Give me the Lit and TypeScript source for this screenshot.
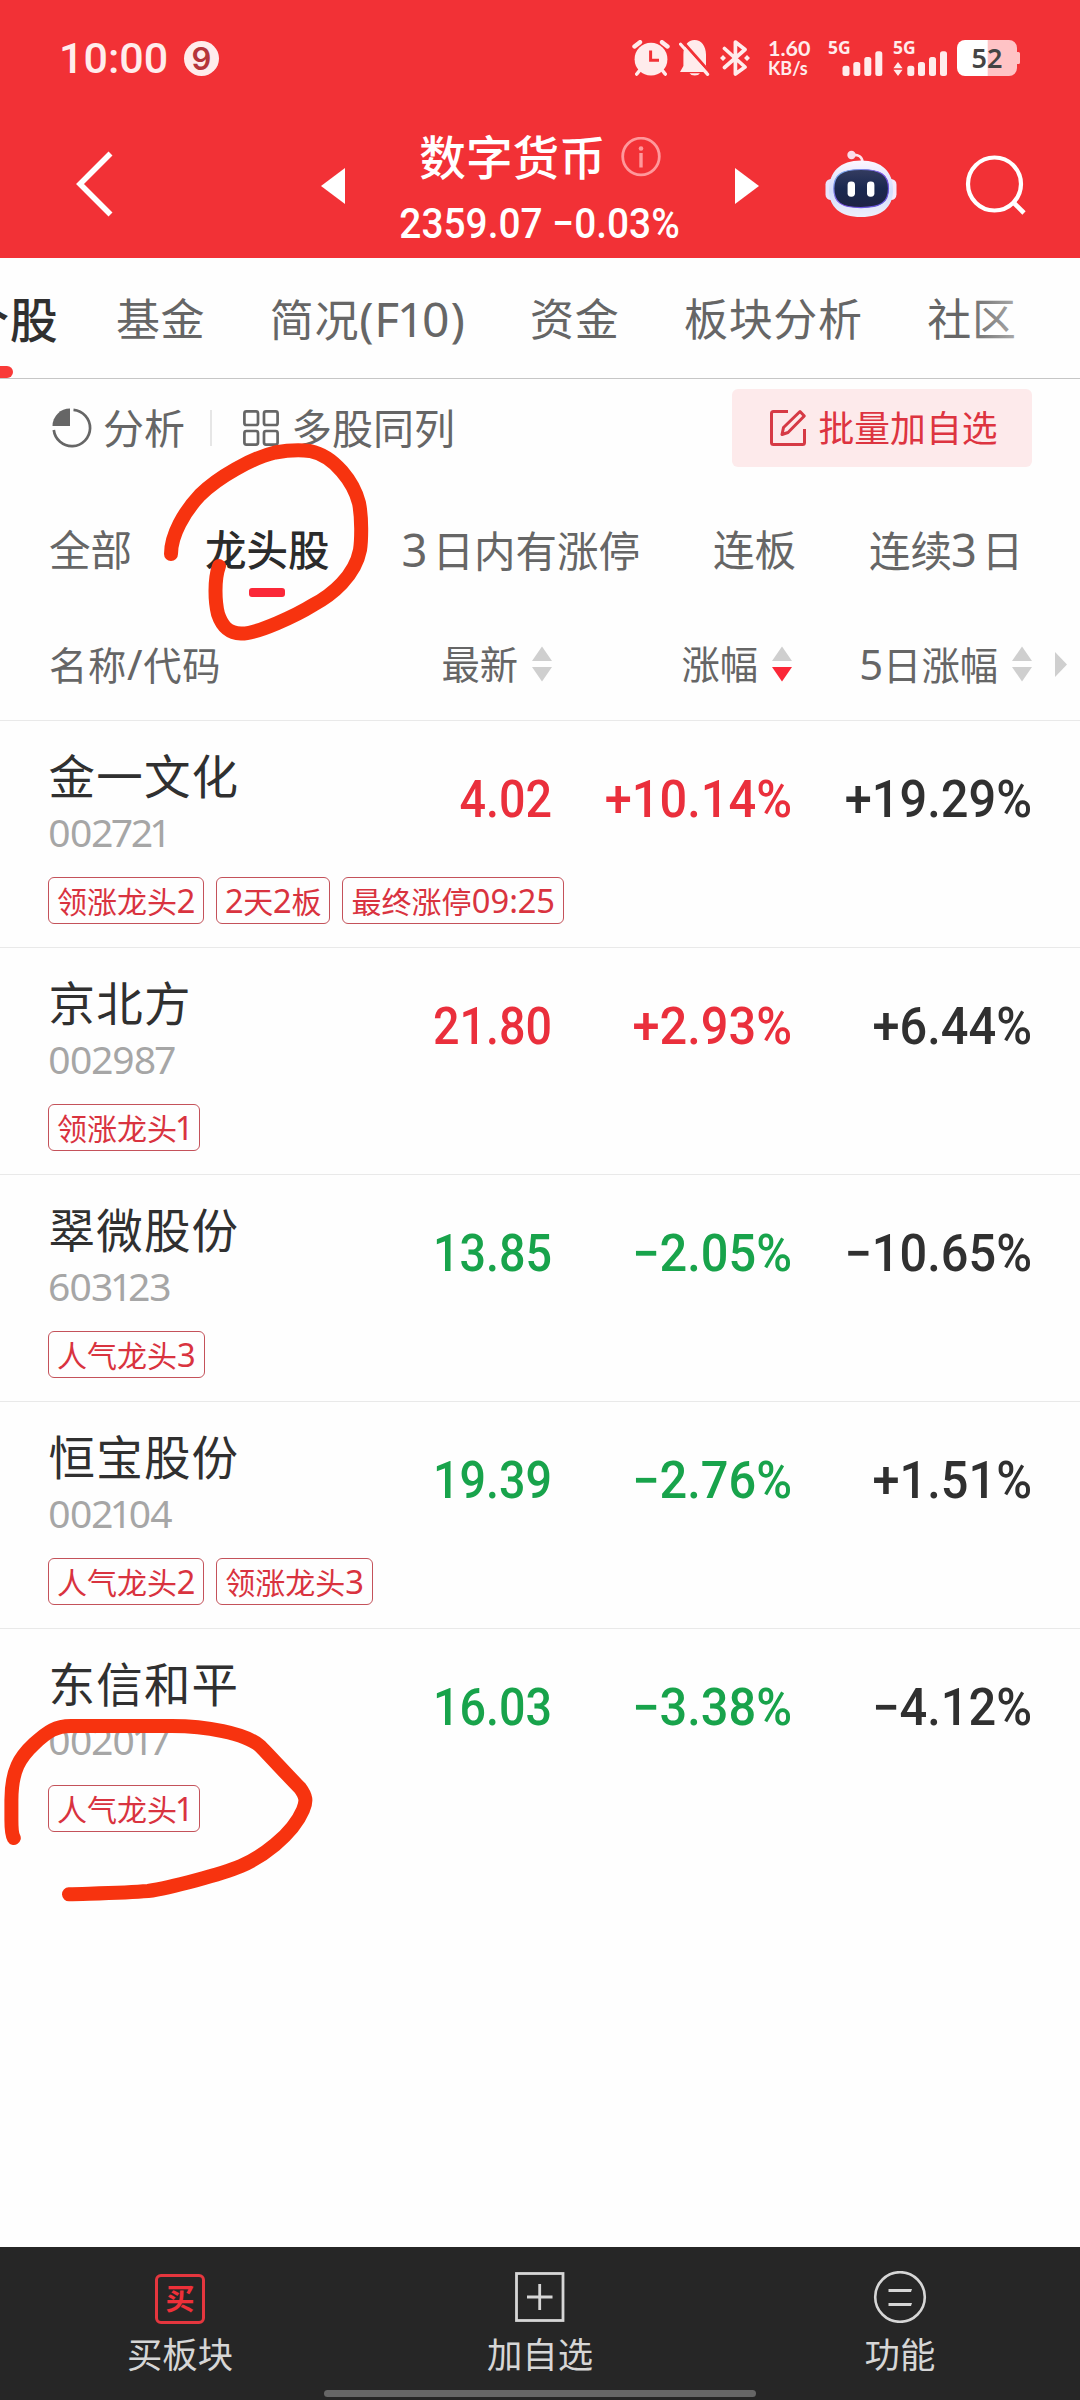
import { LitElement, html, css, svg } from "lit";
import { customElement, property } from "lit/decorators.js";

interface Stock {
  name: string;
  code: string;
  price: string;
  change: string;
  five: string;
  trend: "up" | "down";
  tags: string[];
}

const STOCKS: Stock[] = [
  { name: "金一文化", code: "002721", price: "4.02", change: "+10.14%", five: "+19.29%", trend: "up", tags: ["领涨龙头2", "2天2板", "最终涨停09:25"] },
  { name: "京北方", code: "002987", price: "21.80", change: "+2.93%", five: "+6.44%", trend: "up", tags: ["领涨龙头1"] },
  { name: "翠微股份", code: "603123", price: "13.85", change: "−2.05%", five: "−10.65%", trend: "down", tags: ["人气龙头3"] },
  { name: "恒宝股份", code: "002104", price: "19.39", change: "−2.76%", five: "+1.51%", trend: "down", tags: ["人气龙头2", "领涨龙头3"] },
  { name: "东信和平", code: "002017", price: "16.03", change: "−3.38%", five: "−4.12%", trend: "down", tags: ["人气龙头1"] },
];

const TABS = ["个股", "基金", "简况(F10)", "资金", "板块分析", "社区"];
const FILTERS = ["全部", "龙头股", "3日内有涨停", "连板", "连续3日"];

// Latin runs are set slightly larger than the Chinese text around them.
const mixed = (text: string) =>
  text
    .split(/([\x21-\x7e]+)/)
    .filter((part) => part)
    .map((part) => (/^[\x21-\x7e]/.test(part) ? html`<span class="latin">${part}</span>` : part));

const base = css`
  * { box-sizing: border-box; }
  svg { display: block; flex: none; }
  .latin { font-size: 1.09em; font-variant-numeric: proportional-nums; }
`;

const bars = (xs: number[]) => {
  const tops = [25.7, 22, 17, 11.3];
  return xs.map((x, i) => svg`<rect x=${x} y=${tops[i]} width="7" height=${36 - tops[i]} rx="2.5"/>`);
};

@customElement("status-bar")
class StatusBar extends LitElement {
  static styles = [base, css`
    :host { display: flex; align-items: center; height: 110px; padding: 6px 60px 0 59px; color: #ffecec; font-family: "Roboto", sans-serif; }
    .time { font-size: 43px; line-height: 50px; font-weight: 500; width: 125px; white-space: nowrap; }
    .badge { width: 35px; height: 35px; border-radius: 50%; background: #ffecec; color: #b5343a; font: 600 31px/35px "Inter", sans-serif; text-align: center; }
    .right { margin-left: auto; display: flex; align-items: center; }
    .bell { margin-left: 9px; }
    .bt { margin-left: 10px; }
    .speed { margin-left: 17px; width: 46px; height: 36px; font: 700 18px/17px "Lato", sans-serif; }
    .rate { font-size: 21.5px; line-height: 17px; white-space: nowrap; }
    .unit { font-size: 18px; line-height: 23px; white-space: nowrap; }
    .signal { position: relative; height: 36px; font: 700 17.5px/15px "Noto Sans", sans-serif; fill: currentColor; }
    .first { width: 55px; margin-left: 14px; }
    .second { width: 55px; margin-left: 10px; }
    .signal svg { position: absolute; left: 0; top: 0; }
    .battery { position: relative; margin-left: 9px; width: 63px; height: 36px; }
    .level { position: absolute; left: 0; top: 0; width: 60px; text-align: center; font: 600 27px/36px "Noto Sans", sans-serif; color: #444; }
  `];

  render() {
    return html`
      <div class="time">10:00</div>
      <div class="badge">9</div>
      <div class="right">
        <svg width="38" height="36" viewBox="0 0 38 36">
          <g stroke="#ffecec" stroke-width="4.4" stroke-linecap="round" fill="none">
            <path d="M2.5 6.5L8 2.2M35.5 6.5L30 2.2"/><path d="M8 30L4.8 34M30 30L33.2 34" stroke-width="3.6"/>
          </g>
          <circle cx="19" cy="19.2" r="16.4" fill="#ffecec"/>
          <path d="M18.6 10.5V20.3H27" fill="none" stroke="#f23136" stroke-width="3"/>
        </svg>
        <svg class="bell" width="31" height="36" viewBox="0 0 31 36">
          <path d="M1 32L4.400 26V14.500C4.400 6 9 0 15.600 0S27 6 27 14.500V26L30.500 32Z" fill="#ffecec"/>
          <path d="M10.500 33.200H21A5.600 3.400 0 0 1 10.500 33.200Z" fill="#ffecec"/>
          <path d="M3.500 1.500L31.500 33" stroke="#f23136" stroke-width="3"/>
          <path d="M1.600 4.200L28.600 34.400" stroke="#ffecec" stroke-width="3.200" stroke-linecap="round"/>
        </svg>
        <svg class="bt" width="31" height="36" viewBox="0 0 31 36">
          <path d="M4.500 8.500L25 27L15.400 34V2L25 9.500L4.500 27.500" fill="none" stroke="#ffecec" stroke-width="3.700" stroke-linejoin="round" stroke-linecap="round"/>
          <path d="M3 15L6 18L3 21L0 18ZM27 15L30 18L27 21L24 18Z" fill="#ffecec"/>
        </svg>
        <div class="speed"><div class="rate">1.60</div><div class="unit">KB/s</div></div>
        <div class="signal first">5G<svg width="55" height="36" viewBox="0 0 55 36">${bars([14.5, 25.3, 36.3, 47.3])}</svg></div>
        <div class="signal second">5G<svg width="55" height="36" viewBox="0 0 55 36">
          <path d="M5 22L9.600 28.300H0.400ZM0.400 29.800H9.600L5 36Z"/>${bars([14.3, 25, 36, 47])}</svg></div>
        <div class="battery">
          <svg width="63" height="36" viewBox="0 0 63 36">
            <path d="M8 0H52A8 8 0 0 1 60 8V12H61.500Q63 12 63 13.500V22.500Q63 24 61.500 24H60V28A8 8 0 0 1 52 36H8Z" fill="#ffc3c5"/>
            <path d="M30.700 0H8A8 8 0 0 0 0 8V28A8 8 0 0 0 8 36H30.700Z" fill="#fff"/>
          </svg>
          <div class="level">52</div>
        </div>
      </div>`;
  }
}

@customElement("title-bar")
class TitleBar extends LitElement {
  static styles = [base, css`
    :host { display: flex; align-items: center; height: 148px; color: #fff; }
    .back { margin-left: 76px; }
    .prev { margin: 4px 0 0 208px; }
    .next { margin-top: 4px; }
    .title { width: 390px; display: flex; flex-direction: column; align-items: center; gap: 19px; padding-top: 5px; }
    .name { display: flex; align-items: center; gap: 15px; height: 55px; font: 500 46.6px/55px "Noto Sans", "Noto Sans CJK SC", sans-serif; }
    .quote { font: 500 42px/40px "Roboto", sans-serif; transform: scaleX(0.925); white-space: pre; }
    .robot { margin-left: 66px; }
    .search { margin-left: 68px; }
  `];

  render() {
    return html`
      <svg class="back" width="37" height="66" viewBox="0 0 37 66"><path d="M34.5 2.5L4 33L34.5 63.5" fill="none" stroke="#fff" stroke-width="5.6"/></svg>
      <svg class="prev" width="24" height="36" viewBox="0 0 24 36"><path d="M24 0V36L0 18Z" fill="#fff"/></svg>
      <div class="title">
        <div class="name">
          <span>数字货币</span>
          <svg width="40" height="40" viewBox="0 0 40 40">
            <circle cx="20" cy="19.5" r="18.3" fill="none" stroke="#ff989b" stroke-width="2.8"/>
            <circle cx="20" cy="11.5" r="2.3" fill="#ff989b"/><path d="M20 16V30.500" stroke="#ff989b" stroke-width="3.4"/>
          </svg>
        </div>
        <div class="quote">2359.07 −0.03%</div>
      </div>
      <svg class="next" width="24" height="36" viewBox="0 0 24 36"><path d="M0 0L24 18L0 36Z" fill="#fff"/></svg>
      <svg class="robot" width="72" height="68" viewBox="0 0 72 68">
        <defs>
          <linearGradient id="shell" x1="0" y1="0" x2="0" y2="1"><stop offset="0" stop-color="#fdf6ff"/><stop offset="0.55" stop-color="#d3dcfb"/><stop offset="1" stop-color="#eef0fb"/></linearGradient>
          <linearGradient id="visor" x1="0" y1="0" x2="0" y2="1"><stop offset="0" stop-color="#343c60"/><stop offset="0.5" stop-color="#1a2850"/><stop offset="1" stop-color="#1e2344"/></linearGradient>
          <linearGradient id="rim" x1="0" y1="0" x2="1" y2="1"><stop offset="0" stop-color="#7fc3f4"/><stop offset="0.5" stop-color="#7a4fe0"/><stop offset="1" stop-color="#5b55d8"/></linearGradient>
        </defs>
        <path d="M27 5Q37 4 37.5 12" fill="none" stroke="#ffe3ec" stroke-width="2.6"/>
        <circle cx="26.5" cy="5" r="4.2" fill="#fbdcea"/>
        <rect x="0.5" y="29" width="12" height="21" rx="5.5" fill="#e9e4fb"/><rect x="59.5" y="29" width="12" height="21" rx="5.5" fill="#f5e9fb"/>
        <path d="M36 10.5C57 10.5 68 22 68 40C68 57 57 67 36 67S4 57 4 40C4 22 15 10.5 36 10.5Z" fill="url(#shell)"/>
        <path d="M36 19.500C56 19.500 63.500 25 63.500 38.500S56 57.600 36 57.600S8.800 52 8.800 38.500S16 19.500 36 19.500Z" fill="url(#visor)" stroke="url(#rim)" stroke-width="1.2"/>
        <rect x="22.6" y="31.5" width="7.4" height="15.2" rx="3.4" fill="#fff"/><rect x="42" y="31.5" width="7.4" height="15.2" rx="3.4" fill="#fff"/>
      </svg>
      <svg class="search" width="62" height="62" viewBox="0 0 62 62">
        <circle cx="29.5" cy="31" r="26.5" fill="none" stroke="#fff" stroke-width="4.2"/><path d="M48.500 49.500L59 60" stroke="#fff" stroke-width="4.6"/>
      </svg>`;
  }
}

@customElement("sort-mark")
class SortMark extends LitElement {
  @property({ type: Boolean }) active = false;
  static styles = [base, css`:host { display: block; }`];
  render() {
    return html`<svg width="20" height="36" viewBox="0 0 20 36">
      <path d="M10 0.5L20 15H0Z" fill="#cfcfcf"/><path d="M0 21H20L10 35.5Z" fill=${this.active ? "#fb2838" : "#cfcfcf"}/></svg>`;
  }
}

@customElement("stock-row")
class StockRow extends LitElement {
  @property({ attribute: false }) stock!: Stock;
  static styles = [base, css`
    :host { display: block; height: 227px; padding: 25px 48px 0; border-bottom: 1px solid #e9e9e9; }
    :host(:last-child) { border-bottom: 0; }
    .main { display: grid; grid-template-columns: 264px 240px 240px 240px; align-items: center; }
    .name { padding-left: 0.5px; font-size: 46.5px; line-height: 60px; letter-spacing: 1.2px; color: #303030; white-space: nowrap; }
    .code { margin-top: 6px; font-size: 39px; line-height: 40px; letter-spacing: -1px; color: #a6a6a6; font-variant-numeric: proportional-nums; margin-bottom: 1px; }
    .value { font: 500 51px/60px "Roboto", sans-serif; text-align: right; transform: scaleX(0.955); transform-origin: right; color: #303030; white-space: nowrap; }
    .price { transform: scaleX(0.915); }
    .up { color: #ea2f3c; }
    .down { color: #18a34b; }
    .tags { display: flex; gap: 12px; margin-top: 24px; }
    .tag { height: 47px; padding: 0 8px; border: 1.4px solid #c4525a; border-radius: 6px; font-size: 30px; line-height: 45px; color: #d9333f; white-space: nowrap; }
  `];
  render() {
    const s = this.stock;
    return html`
      <div class="main">
        <div><div class="name">${s.name}</div><div class="code">${s.code}</div></div>
        <div class="value price ${s.trend}">${s.price}</div>
        <div class="value ${s.trend}">${s.change}</div>
        <div class="value">${s.five}</div>
      </div>
      <div class="tags">${s.tags.map((t) => html`<div class="tag">${mixed(t)}</div>`)}</div>`;
  }
}

@customElement("action-bar")
class ActionBar extends LitElement {
  static styles = [base, css`
    :host { position: relative; display: grid; grid-template-columns: repeat(3, 1fr); height: 153px; background: #262626; color: #d6d6d6; }
    .item { display: flex; flex-direction: column; align-items: center; padding-top: 24px; }
    .label { margin-top: 6px; font-size: 35.4px; line-height: 50px; }
    .buy { width: 50px; height: 50px; margin-top: 3px; border: 3px solid #e5363e; border-radius: 6px; color: #ee3039; font-size: 29px; font-weight: 700; line-height: 44px; text-align: center; }
    .first { margin-top: 5px; }
    .home { position: absolute; left: 324px; top: 143px; width: 432px; height: 7px; border-radius: 4px; background: #666; }
  `];
  render() {
    return html`
      <div class="item"><div class="buy">买</div><div class="label first">买板块</div></div>
      <div class="item">
        <svg width="50" height="52" viewBox="0 0 50 52"><rect x="1.5" y="2.500" width="46.500" height="47" fill="none" stroke="#d6d6d6" stroke-width="2.8"/><path d="M12 26H37.500M24.700 13V39" stroke="#d6d6d6" stroke-width="2.8"/></svg>
        <div class="label">加自选</div>
      </div>
      <div class="item">
        <svg width="54" height="52" viewBox="0 0 54 52"><circle cx="27" cy="26" r="24.8" fill="none" stroke="#d6d6d6" stroke-width="2.6"/><path d="M15.5 18H39L38 21H15.5ZM15.5 32H39L38 35H15.5Z" fill="#d6d6d6"/></svg>
        <div class="label">功能</div>
      </div>
      <div class="home"></div>`;
  }
}

@customElement("app-root")
class AppRoot extends LitElement {
  static styles = [base, css`
    :host { position: relative; display: flex; flex-direction: column; width: 1080px; height: 2400px; overflow: hidden; background: #fefefe; color: #666; font-family: "Noto Sans", "Noto Sans CJK SC", sans-serif; }
    .header { background: #f23136; }
    .tabs { position: relative; display: flex; gap: 64.5px; height: 121px; padding-top: 31px; border-bottom: 1px solid #c6c6c6; overflow: hidden; white-space: nowrap; font-size: 44px; line-height: 60px; letter-spacing: 0.7px; }
    .tab { flex: none; }
    .tab.active { position: relative; margin: 0 -7px 0 -39px; font-size: 48px; font-weight: 500; line-height: 62px; color: #303030; }
    .tab.active::after { content: ""; position: absolute; left: 28px; top: 77px; width: 24px; height: 12px; border-radius: 6px; background: #f93a38; }
    .fade { position: absolute; right: 0; top: 0; width: 115px; height: 119px; background: linear-gradient(90deg, rgba(254, 254, 254, 0), #fefefe); }
    .tools { display: flex; align-items: center; height: 98px; padding: 0 48px 0 52px; font-size: 41px; line-height: 60px; }
    .tools-label { margin-left: 11px; white-space: nowrap; }
    .divider { width: 2px; height: 36px; margin: 0 31px 0 25px; background: #e6e6e6; }
    .grid-label { margin-left: 12px; white-space: nowrap; }
    .batch { margin-left: auto; width: 300px; height: 78px; margin-bottom: 1px; display: flex; align-items: center; justify-content: center; gap: 12px; border-radius: 6px; background: #fdeaeb; color: #dd3440; font-size: 35.8px; padding-left: 2px; }
    .filters { display: flex; gap: 73px; height: 147px; padding: 43px 0 0 49px; font-size: 41.5px; line-height: 60px; white-space: nowrap; overflow: hidden; }
    .filter { position: relative; flex: none; }
    .filter .latin { margin: 0 3px; }
    .filter .latin:first-child { margin-left: -1px; margin-right: 5px; }
    .filter.active { color: #2b2b2b; font-weight: 500; }
    .filter.active::after { content: ""; position: absolute; left: 44px; top: 68px; width: 36px; height: 9px; border-radius: 3px; background: #fb2838; }
    .heads { position: relative; display: grid; grid-template-columns: 264px 240px 240px 240px; height: 97px; padding: 0 48px 16px; border-bottom: 1px solid #e9e9e9; font-size: 38.3px; line-height: 50px; white-space: nowrap; }
    .head { display: flex; align-items: center; justify-content: flex-end; gap: 14px; }
    .head.left { justify-content: flex-start; padding-left: 1px; letter-spacing: 0.7px; }
    .more { position: absolute; left: 1055px; top: 28px; }
    .list { flex: 1; }
    .marks { position: absolute; left: 0; top: 0; }
  `];

  render() {
    return html`
      <div class="header"><status-bar></status-bar><title-bar></title-bar></div>
      <div class="tabs">
        ${TABS.map((t, i) => html`<div class="tab ${i === 0 ? "active" : ""}">${mixed(t)}</div>`)}
        <div class="fade"></div>
      </div>
      <div class="tools">
        <svg width="40" height="40" viewBox="0 0 40 40"><path d="M18 0.5V18H0.5A17.5 17.5 0 0 1 18 0.5Z" fill="#666"/><path d="M21.5 1.8A18.2 18.2 0 1 1 1.8 22" fill="none" stroke="#666" stroke-width="2.7"/></svg>
        <div class="tools-label">分析</div>
        <div class="divider"></div>
        <svg width="36" height="36" viewBox="0 0 36 36" fill="none" stroke="#666" stroke-width="2.7"><rect x="1.4" y="1.4" width="13.6" height="13.6" rx="2"/><rect x="21" y="1.4" width="13.6" height="13.6" rx="2"/><rect x="1.4" y="21" width="13.6" height="13.6" rx="2"/><rect x="21" y="21" width="13.6" height="13.6" rx="2"/></svg>
        <div class="grid-label">多股同列</div>
        <div class="batch">
          <svg width="38" height="38" viewBox="0 0 38 38" fill="none" stroke="#d63a45" stroke-width="3"><path d="M19 2.5H4.5Q2.5 2.5 2.5 4.5V33.5Q2.5 35.5 4.5 35.5H33.5Q35.5 35.5 35.5 33.5V20"/><path d="M13 25.5L14.5 18.5L31 2.5L35.3 7L19 23.5Z" stroke-linejoin="round"/></svg>
          <span>批量加自选</span>
        </div>
      </div>
      <div class="filters">
        ${FILTERS.map((f, i) => html`<div class="filter ${i === 1 ? "active" : ""}">${mixed(f)}</div>`)}
      </div>
      <div class="heads">
        <div class="head left"><span>${mixed("名称/代码")}</span></div>
        <div class="head"><span>最新</span><sort-mark></sort-mark></div>
        <div class="head"><span>涨幅</span><sort-mark active></sort-mark></div>
        <div class="head"><span>${mixed("5日涨幅")}</span><sort-mark></sort-mark></div>
        <svg class="more" width="12" height="25" viewBox="0 0 12 25"><path d="M0 0L12 12.5L0 25Z" fill="#cfcfcf"/></svg>
      </div>
      <div class="list">${STOCKS.map((s) => html`<stock-row .stock=${s}></stock-row>`)}</div>
      <action-bar></action-bar>
      <svg class="marks" width="1080" height="2400" viewBox="0 0 1080 2400" fill="none" stroke="#f7330f" stroke-width="14" stroke-linecap="round" stroke-linejoin="round">
        <path d="M171 554C171 535 184 512 200 495C218 477 252 458 275 452.500C289 450 302 450 310 451C335 456 354 483 359 503C362 518 361.500 540 360 550C355 576 332 595 313 605C297 615 257 634 241 633.500C228 633 222 626 218 614C215 602 214 580 219 566"/>
        <path d="M13.800 1838C11.500 1834 11.400 1828 11.400 1820V1800C11.500 1770 20 1757 34 1744C48 1731 56 1726 71 1726H172C205 1726 245 1733 260 1746C268 1754 290 1778 300 1788C306 1796 307 1801 303 1810C292 1836 260 1858 241 1866C222 1874 170 1888 148 1891C125 1893 90 1893.500 69 1894.300"/>
      </svg>`;
  }
}
